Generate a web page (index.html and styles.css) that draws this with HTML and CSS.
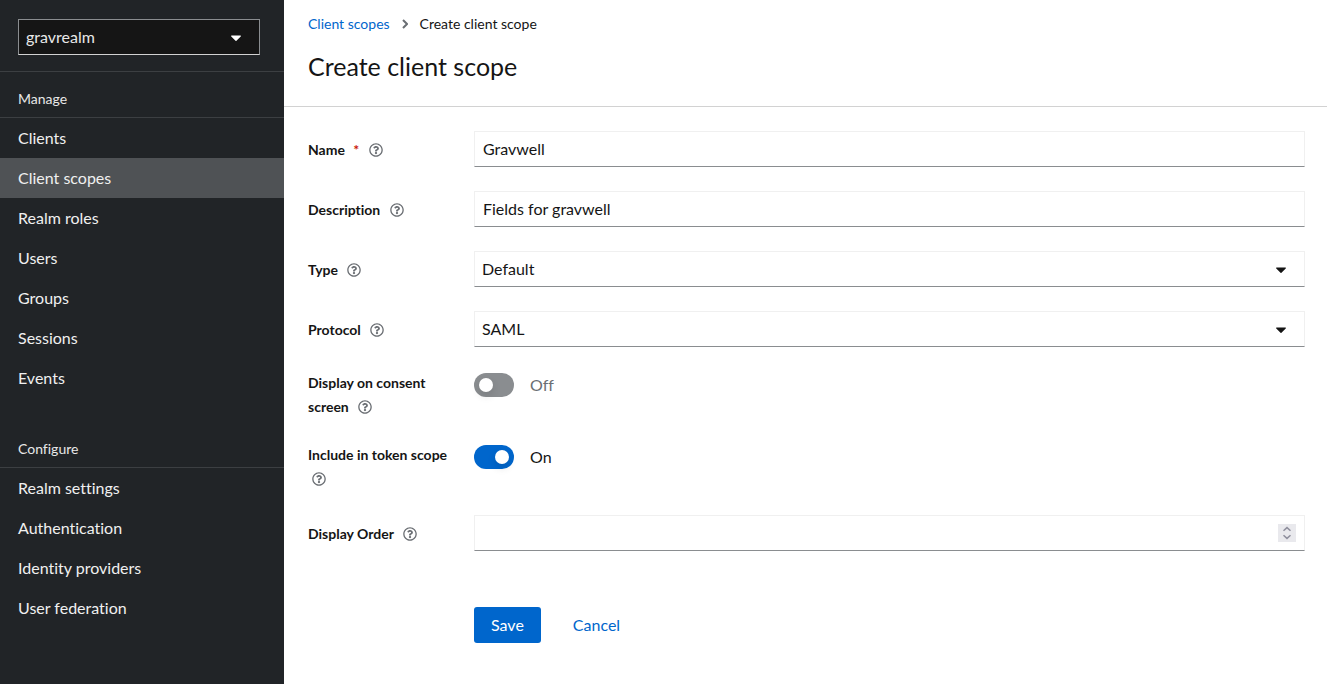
FILE: index.html
```html
<!DOCTYPE html>
<html lang="en">
<head>
<meta charset="utf-8">
<meta name="viewport" content="width=device-width, initial-scale=1">
<title>Create client scope</title>
<link rel="stylesheet" href="styles.css">
</head>
<body>
<svg class="sprite" aria-hidden="true">
  <symbol id="help" viewBox="0 0 512 512"><path d="M256 8C119.043 8 8 119.083 8 256c0 136.997 111.043 248 248 248s248-111.003 248-248C504 119.083 392.957 8 256 8zm0 448c-110.532 0-200-89.431-200-200 0-110.495 89.472-200 200-200 110.491 0 200 89.471 200 200 0 110.53-89.431 200-200 200zm107.244-255.2c0 67.052-72.421 68.084-72.421 92.863V300c0 6.627-5.373 12-12 12h-45.647c-6.627 0-12-5.373-12-12v-8.659c0-35.745 27.1-50.034 47.579-61.516 17.561-9.845 28.324-16.541 28.324-29.579 0-17.246-21.999-28.693-39.784-28.693-23.189 0-33.894 10.977-48.942 29.969-4.057 5.12-11.46 6.071-16.666 2.124l-27.824-21.098c-5.107-3.872-6.251-11.066-2.644-16.363C184.846 131.491 214.94 112 261.794 112c49.071 0 101.45 38.304 101.45 88.8zM298 368c0 23.159-18.841 42-42 42s-42-18.841-42-42 18.841-42 42-42 42 18.841 42 42z"/></symbol>
  <symbol id="caret" viewBox="0 0 320 512"><path d="M31.3 192h257.3c17.8 0 26.7 21.5 14.1 34.1L174.1 354.7c-7.8 7.8-20.5 7.8-28.3 0L17.2 226.1C4.6 213.5 13.5 192 31.3 192z"/></symbol>
</svg>
<div class="page">
  <aside class="sidebar">
    <div class="realm">
      <div class="select-wrap">
        <select class="realm-select" aria-label="Realm"><option>gravrealm</option></select>
        <svg class="caret"><use href="#caret"/></svg>
      </div>
    </div>
    <nav class="nav">
      <section class="nav-group">
        <h2 class="nav-title">Manage</h2>
        <a class="nav-link" href="#">Clients</a>
        <a class="nav-link current" href="#" aria-current="page">Client scopes</a>
        <a class="nav-link" href="#">Realm roles</a>
        <a class="nav-link" href="#">Users</a>
        <a class="nav-link" href="#">Groups</a>
        <a class="nav-link" href="#">Sessions</a>
        <a class="nav-link" href="#">Events</a>
      </section>
      <section class="nav-group">
        <h2 class="nav-title">Configure</h2>
        <a class="nav-link" href="#">Realm settings</a>
        <a class="nav-link" href="#">Authentication</a>
        <a class="nav-link" href="#">Identity providers</a>
        <a class="nav-link" href="#">User federation</a>
      </section>
    </nav>
  </aside>
  <main class="main">
    <header class="header">
      <nav class="breadcrumb" aria-label="Breadcrumb">
        <a class="link" href="#">Client scopes</a>
        <svg class="divider" viewBox="0 0 6 10"><path d="M1 1l4 4-4 4"/></svg>
        <span>Create client scope</span>
      </nav>
      <h1 class="title">Create client scope</h1>
    </header>
    <form class="form">
      <div class="row">
        <div class="label-cell"><label for="name">Name <span class="required">*</span></label> <button type="button" class="help" aria-label="Help for name"><svg><use href="#help"/></svg></button></div>
        <input class="control" id="name" type="text" value="Gravwell">
      </div>
      <div class="row">
        <div class="label-cell"><label for="description">Description</label> <button type="button" class="help" aria-label="Help for description"><svg><use href="#help"/></svg></button></div>
        <input class="control" id="description" type="text" value="Fields for gravwell">
      </div>
      <div class="row">
        <div class="label-cell"><label for="type">Type</label> <button type="button" class="help" aria-label="Help for type"><svg><use href="#help"/></svg></button></div>
        <div class="select-wrap">
          <select class="control select" id="type"><option>Default</option></select>
          <svg class="caret"><use href="#caret"/></svg>
        </div>
      </div>
      <div class="row">
        <div class="label-cell"><label for="protocol">Protocol</label> <button type="button" class="help" aria-label="Help for protocol"><svg><use href="#help"/></svg></button></div>
        <div class="select-wrap">
          <select class="control select" id="protocol"><option>SAML</option></select>
          <svg class="caret"><use href="#caret"/></svg>
        </div>
      </div>
      <div class="row">
        <div class="label-cell top"><label for="consent">Display on consent screen</label> <button type="button" class="help" aria-label="Help for consent screen"><svg><use href="#help"/></svg></button></div>
        <div class="switch-cell"><input class="switch" id="consent" type="checkbox"><label class="off" for="consent">Off</label></div>
      </div>
      <div class="row">
        <div class="label-cell top"><label for="token">Include in token scope</label> <button type="button" class="help wrapped" aria-label="Help for token scope"><svg><use href="#help"/></svg></button></div>
        <div class="switch-cell"><input class="switch" id="token" type="checkbox" checked><label for="token">On</label></div>
      </div>
      <div class="row">
        <div class="label-cell"><label for="order">Display Order</label> <button type="button" class="help" aria-label="Help for display order"><svg><use href="#help"/></svg></button></div>
        <div class="select-wrap">
          <input class="control number" id="order" type="number">
          <svg class="spinner" viewBox="0 0 18 18"><path d="M5.5 6.8L9 3.6l3.5 3.2M5.5 11.2L9 14.4l3.5-3.2"/></svg>
        </div>
      </div>
      <div class="row actions">
        <div class="buttons">
          <button type="submit" class="btn primary">Save</button>
          <button type="button" class="btn plain">Cancel</button>
        </div>
      </div>
    </form>
  </main>
</div>
</body>
</html>
```

FILE: styles.css
```css
* {
  box-sizing: border-box;
}

body {
  margin: 0;
  font: 16px/24px Lato, "Open Sans", sans-serif;
  font-variant-ligatures: none;
  color: #151515;
  background: #fff;
}

button,
input,
select {
  font: inherit;
  color: inherit;
}

.sprite {
  position: absolute;
  width: 0;
  height: 0;
}

.page {
  display: grid;
  grid-template-columns: 284px 1fr;
  min-height: 100vh;
}

.sidebar {
  background: #212427;
  color: #e8e8e8;
}

.realm {
  padding: 19px 24px 16px 18px;
  border-bottom: 1px solid #3c3f42;
}

.select-wrap {
  position: relative;
}

.realm-select {
  display: block;
  width: 100%;
  height: 36px;
  padding: 0 7px;
  appearance: none;
  background: #151515;
  border: 1px solid #8a8d90;
  border-bottom-color: #d2d2d2;
  border-radius: 0;
}

.caret {
  position: absolute;
  top: 10px;
  right: 18px;
  width: 12px;
  height: 17px;
  fill: currentColor;
  pointer-events: none;
}

.realm .caret {
  color: #fff;
}

.nav-title {
  margin: 0;
  padding: 17px 18px 8px;
  font-size: 14px;
  line-height: 20px;
  font-weight: 400;
  border-bottom: 1px solid #3c3f42;
}

.nav-group + .nav-group {
  margin-top: 24px;
}

.nav-link {
  display: block;
  padding: 8px 18px;
  color: #f0f0f0;
  text-decoration: none;
}

.current {
  background: #4f5255;
}

.header {
  padding: 12px 24px 22px;
  border-bottom: 1px solid #d2d2d2;
}

.breadcrumb {
  display: flex;
  align-items: center;
  gap: 12px;
  font-size: 14px;
}

.link {
  color: #06c;
  text-decoration: none;
}

.divider {
  width: 6px;
  height: 10px;
  fill: none;
  stroke: #6a6e73;
  stroke-width: 2;
}

.title {
  margin: 12px 0 0;
  font-size: 25px;
  line-height: 36px;
  font-weight: 400;
}

.form {
  display: grid;
  gap: 24px;
  padding: 24px 22px 24px 24px;
}

.row {
  display: grid;
  grid-template-columns: 150px 1fr;
  column-gap: 16px;
}

.label-cell {
  padding-top: 7px;
  font-size: 14px;
  font-weight: 700;
}

.top {
  padding-top: 0;
}

.required {
  margin-left: 5px;
  color: #c9190b;
}

.help {
  margin-left: 2px;
  padding: 0 4px;
  border: 0;
  background: none;
  color: #6a6e73;
  line-height: 14px;
  vertical-align: -2px;
}

.wrapped {
  margin-left: 0;
}

.help svg {
  display: block;
  width: 14px;
  height: 14px;
  fill: currentColor;
}

.control {
  display: block;
  width: 100%;
  height: 36px;
  padding: 0 8px 1px;
  background: #fff;
  border: 1px solid #f0f0f0;
  border-bottom-color: #8a8d90;
  border-radius: 0;
}

.select {
  padding: 0 7px;
  appearance: none;
}

.number {
  appearance: textfield;
}

.number::-webkit-inner-spin-button {
  appearance: none;
}

.spinner {
  position: absolute;
  top: 9px;
  right: 9px;
  width: 18px;
  height: 18px;
  background: #e9e9ed;
  fill: none;
  stroke: #8f8f9d;
  stroke-width: 1.5;
}

.switch-cell {
  display: flex;
  align-items: flex-start;
  gap: 16px;
  padding-top: 2px;
}

.switch {
  width: 40px;
  height: 24px;
  margin: 0;
  padding: 5px;
  display: flex;
  appearance: none;
  background: #8a8d90;
  border-radius: 12px;
}

.switch::before {
  content: "";
  width: 14px;
  height: 14px;
  border-radius: 50%;
  background: #fff;
  box-shadow: 0 4px 8px rgba(3, 3, 3, 0.12);
}

.switch:checked {
  background: #06c;
  justify-content: flex-end;
}

.off {
  color: #6a6e73;
}

.actions {
  margin-top: 32px;
}

.buttons {
  grid-column: 2;
  display: flex;
  gap: 15px;
}

.btn {
  height: 36px;
  padding: 0 17px;
  border: 0;
  border-radius: 3px;
}

.primary {
  background: #06c;
  color: #fff;
}

.plain {
  background: none;
  color: #06c;
}
```
